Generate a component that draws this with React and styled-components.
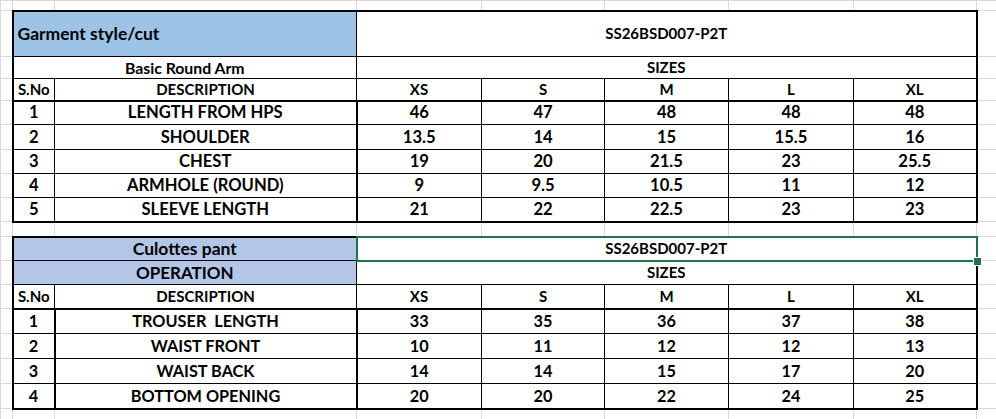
import React from "react";
import styled, { createGlobalStyle } from "styled-components";

const GlobalStyle = createGlobalStyle`
  html, body {
    margin: 0;
    padding: 0;
    background: #ffffff;
  }
  body {
    font-family: "Lato", "Liberation Sans", sans-serif;
    color: #000;
  }
`;

const GRID = "1px solid #d9d9d9";
const THIN = "1px solid #000";
const THICK = "2px solid #000";

const line = (v) => (v === "thick" ? THICK : v === "grid" ? GRID : THIN);

const Sheet = styled.table`
  width: 996px;
  table-layout: fixed;
  border-collapse: collapse;
  border-spacing: 0;
`;

const Row = styled.tr`
  height: ${(p) => p.$h}px;
`;

// empty spreadsheet cell, only the light gridlines
const Gutter = styled.td`
  border: ${GRID};
  padding: 0;
`;

// a cell that belongs to one of the spec tables
const Cell = styled.td`
  position: relative;
  padding: 0 ${(p) => (p.$align === "left" ? 4 : 0)}px;
  border-top: ${(p) => line(p.$t)};
  border-right: ${(p) => line(p.$r)};
  border-bottom: ${(p) => line(p.$b)};
  border-left: ${(p) => line(p.$l)};
  background: ${(p) => p.$fill || "#ffffff"};
  text-align: ${(p) => p.$align || "center"};
  vertical-align: middle;
  font-size: ${(p) => p.$size || 15}px;
  font-weight: 700;
  line-height: 1;
  white-space: pre;
`;

// excel active cell frame, sits over the cell
const Selection = styled.span`
  position: absolute;
  z-index: 2;
  top: -2px;
  left: -1px;
  right: -2px;
  bottom: -2px;
  border: 2px solid #217346;
  pointer-events: none;
`;

const Handle = styled.span`
  position: absolute;
  right: -5px;
  bottom: -5px;
  width: 7px;
  height: 7px;
  background: #217346;
  outline: 1px solid #ffffff;
`;

const cols = [12, 42, 302, 125, 123, 124, 125, 123, 20];
const sizes = ["XS", "S", "M", "L", "XL"];

const garment = [
  ["1", "LENGTH FROM HPS", "46", "47", "48", "48", "48"],
  ["2", "SHOULDER", "13.5", "14", "15", "15.5", "16"],
  ["3", "CHEST", "19", "20", "21.5", "23", "25.5"],
  ["4", "ARMHOLE (ROUND)", "9", "9.5", "10.5", "11", "12"],
  ["5", "SLEEVE LENGTH", "21", "22", "22.5", "23", "23"],
];
const garmentHeights = [24, 25, 24, 24, 24];

const culottes = [
  ["1", "TROUSER  LENGTH", "33", "35", "36", "37", "38"],
  ["2", "WAIST FRONT", "10", "11", "12", "12", "13"],
  ["3", "WAIST BACK", "14", "14", "15", "17", "20"],
  ["4", "BOTTOM OPENING", "20", "20", "22", "24", "25"],
];

const EmptyRow = ({ h }) => (
  <Row $h={h}>
    {cols.map((_, i) => (
      <Gutter key={i} />
    ))}
  </Row>
);

const HeaderRow = ({ h }) => (
  <Row $h={h}>
    <Gutter />
    <Cell $l="thick" $b="thick">S.No</Cell>
    <Cell $b="thick">DESCRIPTION</Cell>
    {sizes.map((s, i) => (
      <Cell key={s} $b="thick" $r={i === 4 ? "thick" : "thin"}>
        {s}
      </Cell>
    ))}
    <Gutter />
  </Row>
);

const DataRow = ({ data, h, last, boxed, size }) => (
  <Row $h={h}>
    <Gutter />
    <Cell $size={size} $l="thick" $r={boxed ? "thick" : "thin"} $b={last ? "thick" : "thin"}>
      {data[0]}
    </Cell>
    <Cell $size={size} $r="thick" $l={boxed ? "thick" : "thin"} $b={last ? "thick" : "thin"}>
      {data[1]}
    </Cell>
    {data.slice(2).map((v, i) => (
      <Cell key={i} $size={size} $r={i === 4 ? "thick" : "thin"} $b={last ? "thick" : "thin"}>
        {v}
      </Cell>
    ))}
    <Gutter />
  </Row>
);

const App = () => {
  return (
    <>
      <GlobalStyle />
      <Sheet>
        <colgroup>
          {cols.map((w, i) => (
            <col key={i} style={{ width: w }} />
          ))}
        </colgroup>
        <tbody>
          <EmptyRow h={10} />

          {/* garment table */}
          <Row $h={46}>
            <Gutter />
            <Cell colSpan={2} $t="thick" $l="thick" $fill="#9dc3e6" $align="left" $size={17.5}>
              Garment style/cut
            </Cell>
            <Cell colSpan={5} $t="thick" $r="thick">
              SS26BSD007-P2T
            </Cell>
            <Gutter />
          </Row>
          <Row $h={22}>
            <Gutter />
            <Cell colSpan={2} $l="thick" $size={15.8}>
              Basic Round Arm
            </Cell>
            <Cell colSpan={5} $r="thick">SIZES</Cell>
            <Gutter />
          </Row>
          <HeaderRow h={22} />
          {garment.map((d, i) => (
            <DataRow
              key={d[0]}
              data={d}
              h={garmentHeights[i]}
              size={16.6}
              last={i === garment.length - 1}
            />
          ))}

          <EmptyRow h={15} />

          {/* culottes table */}
          <Row $h={24}>
            <Gutter />
            <Cell colSpan={2} $t="thick" $l="thick" $fill="#b4c6e7" $size={17.5}>
              Culottes pant
            </Cell>
            <Cell colSpan={5} $t="thick" $r="thick">
              SS26BSD007-P2T
              <Selection>
                <Handle />
              </Selection>
            </Cell>
            <Gutter />
          </Row>
          <Row $h={24}>
            <Gutter />
            <Cell colSpan={2} $l="thick" $fill="#b4c6e7" $size={17}>
              OPERATION
            </Cell>
            <Cell colSpan={5} $r="thick">SIZES</Cell>
            <Gutter />
          </Row>
          <HeaderRow h={24} />
          {culottes.map((d, i) => (
            <DataRow
              key={d[0]}
              data={d}
              h={25}
              size={16.3}
              boxed
              last={i === culottes.length - 1}
            />
          ))}

          <EmptyRow h={11} />
        </tbody>
      </Sheet>
    </>
  );
};

export default App;
